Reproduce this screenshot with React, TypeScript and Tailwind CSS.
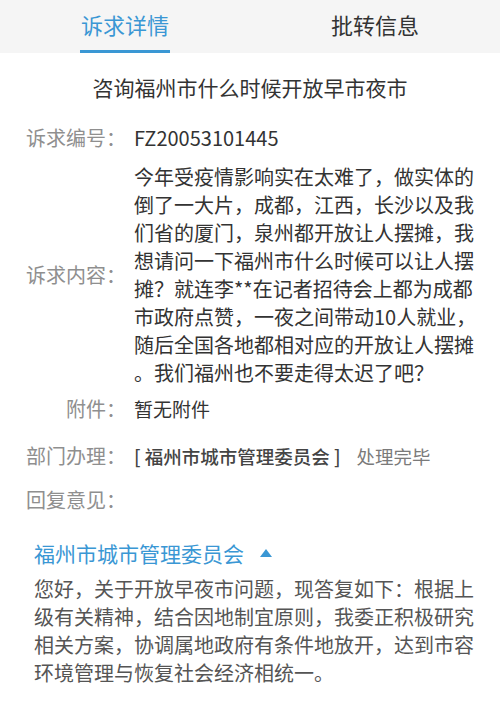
const contentLines = [
  '今年受疫情影响实在太难了，做实体的',
  '倒了一大片，成都，江西，长沙以及我',
  '们省的厦门，泉州都开放让人摆摊，我',
  '想请问一下福州市什么时候可以让人摆',
  '摊？就连李**在记者招待会上都为成都',
  '市政府点赞，一夜之间带动10人就业，',
  '随后全国各地都相对应的开放让人摆摊',
  '。我们福州也不要走得太迟了吧？',
];

const replyLines = [
  '您好，关于开放早夜市问题，现答复如下：根据上',
  '级有关精神，结合因地制宜原则，我委正积极研究',
  '相关方案，协调属地政府有条件地放开，达到市容',
  '环境管理与恢复社会经济相统一。',
];

function Label({ children }: { children: React.ReactNode }) {
  return (
    <div className="w-[126px] shrink-0 text-right text-[20px] leading-[28px] text-[#8f8f8f]">
      {children}
    </div>
  );
}

export default function App() {
  return (
    <div
      className="min-h-screen w-[500px] bg-white"
      style={{ fontFamily: '"Noto Sans CJK SC", "Noto Sans", sans-serif' }}
    >
      {/* Tabs */}
      <div className="flex h-[53px] bg-[#f5f5f5]">
        <div className="flex flex-1 flex-col items-center justify-end">
          <div className="text-[22px] leading-[30px] text-[#3a97d4]">诉求详情</div>
          <div className="mt-[11px] h-[3px] w-[90px] bg-[#3a97d4]" />
        </div>
        <div className="flex flex-1 flex-col items-center justify-end">
          <div className="text-[22px] leading-[30px] text-[#333333]">批转信息</div>
          <div className="mt-[11px] h-[3px] w-[90px]" />
        </div>
      </div>

      {/* Title */}
      <div className="mt-[19px] text-center text-[21px] leading-[30px] text-[#333333]">
        咨询福州市什么时候开放早市夜市
      </div>

      <div className="mt-[22px] flex items-center">
        <Label>诉求编号：</Label>
        <div className="ml-[8px] text-[20px] leading-[28px] text-[#333333]">FZ20053101445</div>
      </div>

      <div className="mt-[11px] flex items-center">
        <Label>诉求内容：</Label>
        <div className="ml-[8px] text-[20px] leading-[28px] text-[#333333]">
          {contentLines.map((l) => (
            <div key={l} className="whitespace-nowrap">
              {l}
            </div>
          ))}
        </div>
      </div>

      <div className="mt-[8px] flex items-center">
        <Label>附件：</Label>
        <div className="ml-[8px] text-[19px] leading-[28px] text-[#333333]">暂无附件</div>
      </div>

      <div className="mt-[19px] flex items-center">
        <Label>部门办理：</Label>
        <div className="ml-[8px] flex items-center text-[18.5px] leading-[28px]">
          <span className="whitespace-pre font-medium text-[#444444]">[ 福州市城市管理委员会 ]</span>
          <span className="ml-[16px] text-[#7a7a7a]">处理完毕</span>
        </div>
      </div>

      <div className="mt-[16px] flex items-center">
        <Label>回复意见：</Label>
      </div>

      {/* Reply */}
      <div className="mt-[24px] px-[34px]">
        <div className="flex items-center text-[21px] leading-[30px] text-[#3a97d4]">
          <span>福州市城市管理委员会</span>
          <svg className="ml-[16px]" width="12" height="8" viewBox="0 0 12 8">
            <polygon points="6,0 12,8 0,8" fill="#3a97d4" />
          </svg>
        </div>
        <div className="mt-[7px] text-[20px] leading-[28px] text-[#555555]">
          {replyLines.map((l) => (
            <div key={l} className="whitespace-nowrap">
              {l}
            </div>
          ))}
        </div>
      </div>
    </div>
  );
}
